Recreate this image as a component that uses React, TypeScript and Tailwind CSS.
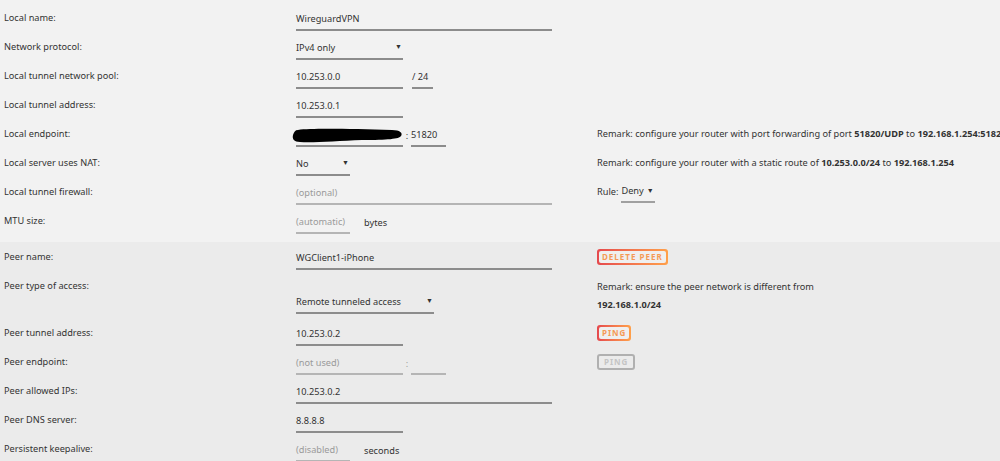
import type { ReactNode } from 'react';

const font = { fontFamily: '"Noto Sans", "Liberation Sans", sans-serif' };

function Field({ width, value, placeholder }: { width: string; value?: string; placeholder?: string }) {
  return (
    <div className={`${width} shrink-0 h-[23px] flex items-center border-b-2 ${value ? 'border-[#8c8c8c]' : 'border-[#b5b5b5]'}`}>
      {value ? (
        <span className="text-[#333]">{value}</span>
      ) : (
        <span className="text-[#9a9a9a]">{placeholder}</span>
      )}
    </div>
  );
}

function Select({ width, value }: { width: string; value: string }) {
  return (
    <div className={`${width} shrink-0 h-[23px] flex items-center justify-between border-b-2 border-[#8c8c8c] pr-[1px]`}>
      <span className="text-[#333]">{value}</span>
      <span className="text-[7px] text-[#333]">▼</span>
    </div>
  );
}

function Row({ label, children, right, tall }: { label: string; children: ReactNode; right?: ReactNode; tall?: boolean }) {
  return (
    <div className={`flex ${tall ? 'h-[47px]' : 'h-[29px]'}`}>
      <div className={`w-[292px] shrink-0 text-[#333] flex ${tall ? 'items-start pt-[8px]' : 'items-center'}`}>{label}</div>
      <div className={`w-[301px] shrink-0 flex ${tall ? 'items-end pb-[4px]' : 'items-end pb-[1px]'}`}>{children}</div>
      <div className="flex-1 min-w-0 flex items-center text-[#333] whitespace-nowrap">{right}</div>
    </div>
  );
}

function GradButton({ text, disabled }: { text: string; disabled?: boolean }) {
  if (disabled) {
    return (
      <div className="h-[16px] px-[5px] flex items-center rounded-[3px] border-2 border-[#b0b0b0] text-[#c4c4c4] text-[8px] font-bold tracking-[1px]">
        {text}
      </div>
    );
  }
  return (
    <div className="rounded-[3px] p-[2px] bg-linear-to-r from-[#e5484d] to-[#ffa04a]">
      <div className="h-[12px] px-[3px] flex items-center rounded-[2px] bg-[#efefef] text-[#f59a55] text-[8px] font-bold tracking-[1px]">
        {text}
      </div>
    </div>
  );
}

export default function App() {
  return (
    <div className="w-[1000px] h-[461px] overflow-hidden bg-[#f2f2f2] text-[9.2px]" style={font}>
      <div className="pl-[4px] pt-[3px] pb-[7px]">
        <Row label="Local name:">
          <Field width="w-[256px]" value="WireguardVPN" />
        </Row>
        <Row label="Network protocol:">
          <Select width="w-[107px]" value="IPv4 only" />
        </Row>
        <Row label="Local tunnel network pool:">
          <Field width="w-[107px]" value="10.253.0.0" />
          <div className="ml-[9px] w-[21px] h-[23px] flex items-center border-b-2 border-[#8c8c8c] text-[#333]">/ 24</div>
        </Row>
        <Row label="Local tunnel address:">
          <Field width="w-[107px]" value="10.253.0.1" />
        </Row>
        <Row
          label="Local endpoint:"
          right={
            <span>
              Remark: configure your router with port forwarding of port <b>51820/UDP</b> to <b>192.168.1.254:51820</b>
            </span>
          }
        >
          <div className="relative w-[107px] shrink-0 h-[23px] border-b-2 border-[#8c8c8c]">
            <svg className="absolute left-[-4px] top-[3px]" width="112" height="17" viewBox="0 0 112 17">
              <path d="M6 3 C20 1 60 2 100 3 C108 3 111 6 109 9 C107 12 96 13 70 13 C45 14 20 16 8 15 C2 15 0 12 1 8 C2 5 3 3 6 3 Z" fill="#000" />
            </svg>
          </div>
          <span className="w-[8px] shrink-0 h-[23px] flex items-center justify-center text-[#333]">:</span>
          <Field width="w-[35px]" value="51820" />
        </Row>
        <Row
          label="Local server uses NAT:"
          right={
            <span>
              Remark: configure your router with a static route of <b>10.253.0.0/24</b> to <b>192.168.1.254</b>
            </span>
          }
        >
          <Select width="w-[54px]" value="No" />
        </Row>
        <Row
          label="Local tunnel firewall:"
          right={
            <span className="flex items-center">
              Rule:
              <span className="ml-[3px] h-[21px] mt-[1px] flex items-center gap-[3px] border-b-2 border-[#a0a0a0] pr-[1px]">
                Deny <span className="text-[7px]">▼</span>
              </span>
            </span>
          }
        >
          <Field width="w-[256px]" placeholder="(optional)" />
        </Row>
        <Row label="MTU size:">
          <Field width="w-[54px]" placeholder="(automatic)" />
          <span className="ml-[14px] h-[23px] flex items-center text-[#333]">bytes</span>
        </Row>
      </div>

      <div className="bg-[#ebebeb] pl-[4px] pb-[20px]">
        <Row label="Peer name:" right={<GradButton text="DELETE PEER" />}>
          <Field width="w-[256px]" value="WGClient1-iPhone" />
        </Row>
        <Row
          tall
          label="Peer type of access:"
          right={
            <div className="self-start pt-[7px] leading-[18px]">
              <div>Remark: ensure the peer network is different from</div>
              <div className="font-bold">192.168.1.0/24</div>
            </div>
          }
        >
          <Select width="w-[138px]" value="Remote tunneled access" />
        </Row>
        <Row label="Peer tunnel address:" right={<GradButton text="PING" />}>
          <Field width="w-[107px]" value="10.253.0.2" />
        </Row>
        <Row label="Peer endpoint:" right={<GradButton text="PING" disabled />}>
          <Field width="w-[107px]" placeholder="(not used)" />
          <span className="w-[8px] shrink-0 h-[23px] flex items-center justify-center text-[#999]">:</span>
          <Field width="w-[35px]" placeholder="" />
        </Row>
        <Row label="Peer allowed IPs:">
          <Field width="w-[256px]" value="10.253.0.2" />
        </Row>
        <Row label="Peer DNS server:">
          <Field width="w-[107px]" value="8.8.8.8" />
        </Row>
        <Row label="Persistent keepalive:">
          <Field width="w-[54px]" placeholder="(disabled)" />
          <span className="ml-[14px] h-[23px] flex items-center text-[#333]">seconds</span>
        </Row>
      </div>
    </div>
  );
}
